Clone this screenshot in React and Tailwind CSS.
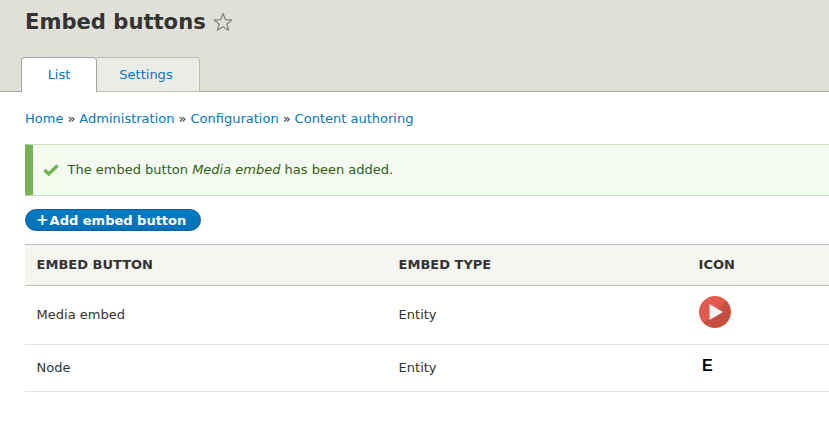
export default function App() {
  return (
    <div className="w-[829px] h-[437px] overflow-hidden bg-white font-['DejaVu_Sans',sans-serif] text-[13px] text-[#333]">
      <div className="w-[1000px]">
        <header className="h-[92px] bg-[#e0e0d8] border-b border-[#a6a6a6] flex flex-col justify-between">
          <div className="flex items-center pl-[25px] pt-[8px] gap-[7px]">
            <h1 className="text-[21.125px] leading-[28px] font-bold text-[#333]">Embed buttons</h1>
            <svg width="20" height="20" viewBox="0 0 20 20" className="shrink-0">
              <path d="M10 1.6 L12.4 7.6 L18.8 8 L13.9 12 L15.5 18.2 L10 14.8 L4.5 18.2 L6.1 12 L1.2 8 L7.6 7.6 Z" fill="none" stroke="#87877a" strokeWidth="1.3" strokeLinejoin="round" />
            </svg>
          </div>
          <nav className="flex pl-[21px] -mb-px h-[35px]">
            <a className="w-[76px] flex items-center justify-center bg-white text-[#0678be] border border-b-0 border-[#a6a6a6] rounded-t-[4px]">List</a>
            <a className="w-[103px] flex items-center justify-center pr-[4px] bg-[#ecece6] text-[#0678be] border border-l-0 border-[#bfbfba] rounded-tr-[4px]">Settings</a>
          </nav>
        </header>
        <main className="pl-[25px] pr-[25px]">
          <div className="pt-[18px] h-[52px] leading-[17px] text-[#0678be] flex gap-[4px]">
            <a>Home</a><span className="text-[#333]">»</span><a>Administration</a><span className="text-[#333]">»</span><a>Configuration</a><span className="text-[#333]">»</span><a>Content authoring</a>
          </div>
          <div className="h-[52px] bg-[#f3faef] border border-l-0 border-[#c9e1bd] border-l-[8px] border-l-[#77b259] rounded-l-[2px] flex items-center text-[#325e1c] pl-[10px] gap-[8.5px]">
            <svg width="16" height="14" viewBox="0 0 16 14" className="shrink-0">
              <path d="M1.5 7 L5.8 11 L14.5 2.5" fill="none" stroke="#73b355" strokeWidth="3.4" />
            </svg>
            <span>The embed button <em>Media embed</em> has been added.</span>
          </div>
          <a className="mt-[13px] w-[176px] h-[22px] flex items-center pl-[10px] pt-[1px] gap-[1px] rounded-full bg-gradient-to-b from-[#007bc6] to-[#0071b8] border border-[#1e5c90] text-white font-bold">
            <span className="text-[15px] leading-none">+</span><span>Add embed button</span>
          </a>
          <div className="mt-[13px]">
            <div className="grid grid-cols-[362px_300px_1fr] h-[42px] items-center bg-[#f5f5f2] border-y border-[#bfbfba] font-bold text-[#333] uppercase">
              <div className="pl-[11.6px]">Embed button</div>
              <div className="pl-[11.6px]">Embed type</div>
              <div className="pl-[11.6px]">Icon</div>
            </div>
            <div className="grid grid-cols-[362px_300px_1fr] h-[59px] items-center border-b border-[#e6e4df]">
              <div className="pl-[11.6px]">Media embed</div>
              <div className="pl-[11.6px]">Entity</div>
              <div className="pl-[12px] pb-[6px]">
                <svg width="32" height="32" viewBox="0 0 32 32" className="block">
                  <circle cx="16" cy="16" r="16" fill="#e25a4b" />
                  <path d="M27.3 4.7 A16 16 0 0 1 4.7 27.3 L16 16 Z" fill="#c5503f" />
                  <path d="M10.5 8 L24 16 L10.5 24 Z" fill="#f3f3f3" />
                </svg>
              </div>
            </div>
            <div className="grid grid-cols-[362px_300px_1fr] h-[47px] items-center border-b border-[#e6e4df]">
              <div className="pl-[11.6px]">Node</div>
              <div className="pl-[11.6px]">Entity</div>
              <div className="pl-[15px] pb-[5px] font-bold text-[16px] text-black font-['Liberation_Sans',sans-serif]">E</div>
            </div>
          </div>
        </main>
      </div>
    </div>
  );
}
